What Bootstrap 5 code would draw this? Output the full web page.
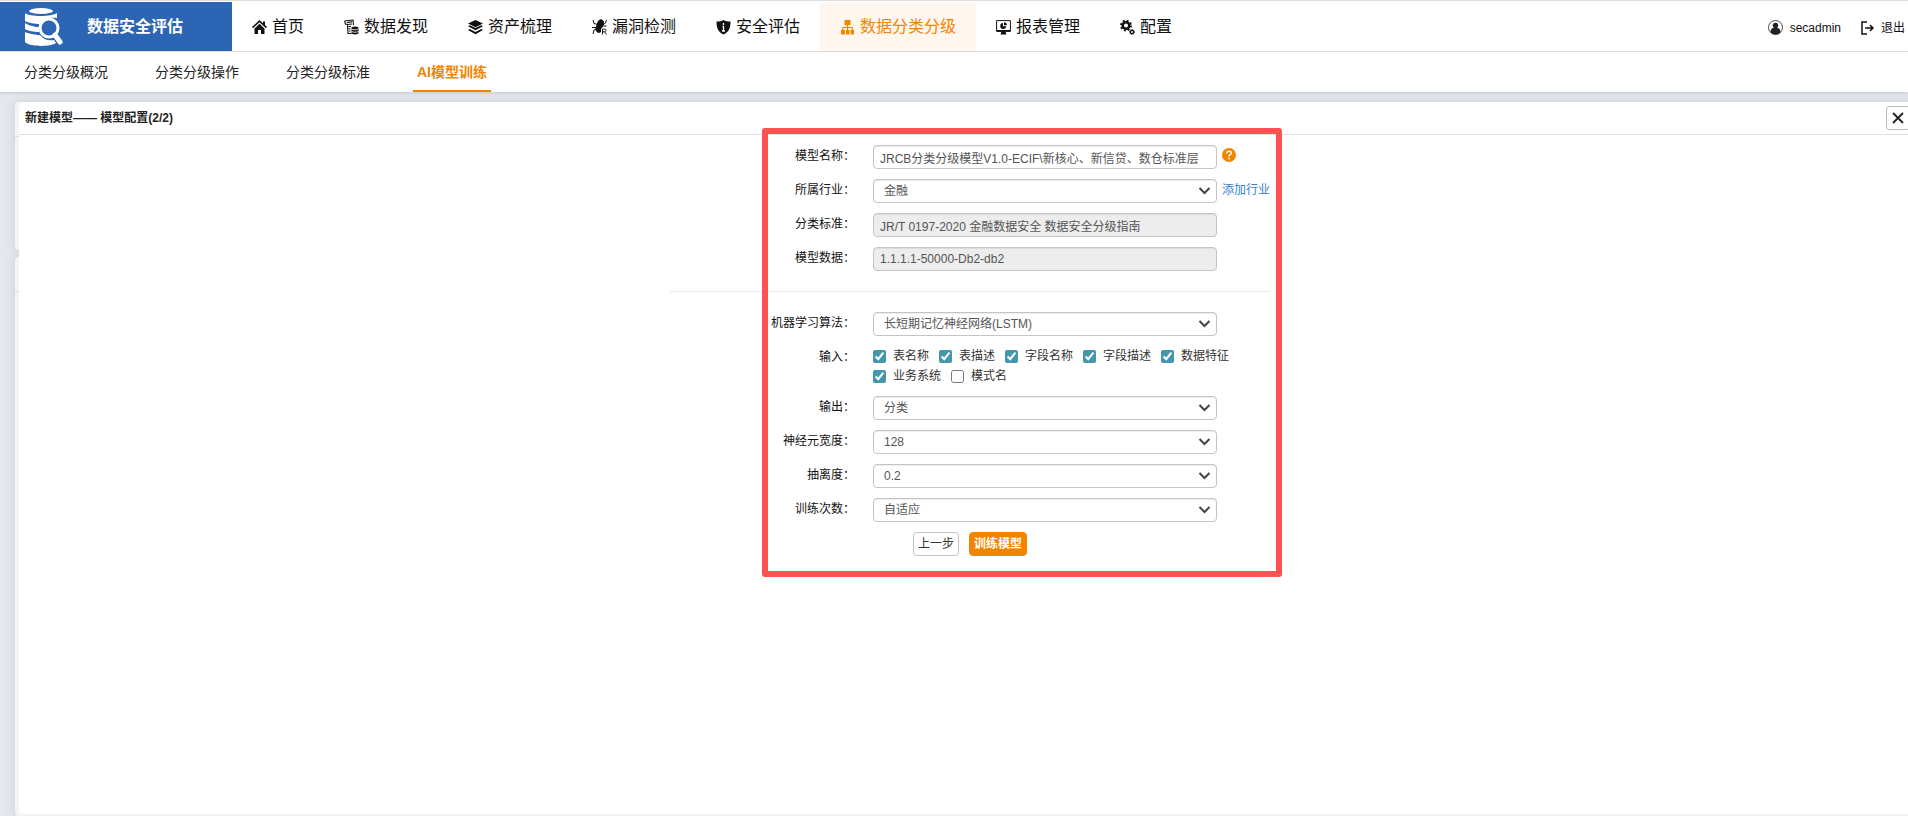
<!DOCTYPE html>
<html lang="zh-CN">
<head>
<meta charset="utf-8">
<meta name="viewport" content="width=device-width, initial-scale=1">
<title>数据安全评估</title>
<link rel="stylesheet" href="https://cdn.jsdelivr.net/npm/bootstrap@5.3.0/dist/css/bootstrap.min.css">
<style>
  body {
    font-family: "Liberation Sans", "Noto Sans CJK SC", sans-serif;
    font-size: 12px; line-height: 20px; color: #222;
    background: #e5e8ed;
    overflow: hidden;
  }
  a { text-decoration: none; color: inherit; }
  .top-bar { height: 52px; border-top: 1px solid #ddd; border-bottom: 1px solid #e2e2e2; padding-top: 1px; }
  .brand-block { width: 232px; background: #2c65b3; padding-left: 25px; gap: 24px; font-size: 16px; }
  .main-menu { font-size: 16px; }
  .main-menu a { padding: 0 20px; gap: 5px; color: #111; white-space: nowrap; }
  .main-menu svg { width: 15px; height: 16px; flex: none; }
  .main-menu a.current { color: #f28500; background: #fff6f0; }
  .user-links { padding: 2px 3px 0 0; gap: 20px; }
  .user-links a { gap: 7px; color: #111; white-space: nowrap; }
  .sub-menu { height: 40px; padding-left: 20px; gap: 39px; font-size: 14px; box-shadow: 0 1px 3px rgba(0,0,0,.15); z-index: 2; }
  .sub-menu a { padding: 2px 4px 0; border-bottom: 2px solid transparent; }
  .sub-menu a.current { color: #f28500; border-bottom-color: #f28500; font-weight: 700; }
  .workspace { padding: 10px 0 2px 19px; }
  .under-cards { position: absolute; left: 15px; right: -13px; top: 10px; bottom: 0; gap: 7px; }
  .under-cards div { background: #f4f4f5; border-radius: 4px; box-shadow: 0 0 12px rgba(60,70,90,.16); }
  .under-cards div::before { content: ""; display: block; margin-top: 34px; border-top: 1px solid #ddd; }
  .under-cards .first-card { min-height: 148px; }
  .dialog-panel { position: relative; background: #fff; border-radius: 5px; margin-right: -13px; }
  .dialog-head { height: 33px; padding: 0 11px 0 6px; border-bottom: 1px solid #dee2e6; }
  .dialog-head h1 { font-size: 12px; line-height: 20px; }
  .close-btn { width: 24px; height: 24px; background: #fff; border: 1px solid #bbb; border-radius: 3px; }
  .model-form { position: relative; width: 600px; padding: 10px 0 15px; }
  .marker-frame { position: absolute; left: 92px; right: -12px; top: -7px; bottom: -6px; border: 6px solid #fb5252; border-radius: 3px; pointer-events: none; }
  .field-row { margin-bottom: 10px; }
  .field-name { width: 185px; margin-right: 18px; text-align: right; line-height: 22px; color: #111; }
  .model-form .form-control, .model-form .form-select {
    width: 344px; height: 24px; min-height: 0; font-size: 12px; line-height: 18px; color: #555;
    border: 1px solid #c4c4c4; border-radius: 4px; box-shadow: inset 0 1px 1px rgba(0,0,0,.075);
    padding: 2px 6px;
  }
  .model-form .form-select {
    padding: 2px 30px 2px 10px;
    background: #fff url("data:image/svg+xml,%3Csvg xmlns='http://www.w3.org/2000/svg' viewBox='0 0 12 8'%3E%3Cpath d='M1 1l5 5 5-5' fill='none' stroke='%23444' stroke-width='2'/%3E%3C/svg%3E") no-repeat right 5px center / 13px 8px;
  }
  .model-form .form-control:read-only { background: #ededed; }
  .tick-list { width: 370px; column-gap: 10px; color: #333; }
  .tick-list label { gap: 7px; }
  .tick-list input { width: 13px; height: 13px; margin: 0; accent-color: #4497ab; }
  .help-dot { color: #f28500; margin-left: 5px; }
  .help-dot svg { display: block; margin-top: 3px; }
  .add-link { margin-left: 5px; line-height: 22px; color: #3681c8; }
  .split-line { height: 1px; background: #e8e8e8; margin: 20px 0; }
  .form-actions { padding-left: 243px; gap: 10px; }
  .form-actions .btn { height: 24px; font-size: 12px; line-height: 18px; padding: 2px 4px; border-radius: 4px; }
  .prev-btn { border: 1px solid #c4c4c4; color: #333; background: #fff; }
  .train-btn { border: 1px solid #f28500; color: #fff; background: #f28500; font-weight: 700; }
</style>
</head>
<body class="min-vh-100 d-flex flex-column">

<header class="top-bar bg-white d-flex">
  <a href="#" class="brand-block d-flex align-items-center text-white fw-bold">
    <svg width="38" height="38" viewBox="0 0 38 38" fill="#fff">
      <ellipse cx="16" cy="3" rx="12" ry="3"/>
      <path d="M0 5c4 4 27 4 32 0v5c-6-1-13 0-17 6-5 0-12-1-15-3z"/>
      <path d="M0 15c3 2 9 4 14 4v5c-5 0-11-1-14-3z"/>
      <path d="M0 24c4 2 11 3 15 3 4 5 9 6 14 5l2 3c-6 4-26 4-31-1z"/>
      <circle cx="24" cy="20" r="9" fill="#2c65b3" stroke="#fff" stroke-width="3"/>
      <path d="M30 27l5 7" stroke="#fff" stroke-width="5" stroke-linecap="round"/>
    </svg>
    <span>数据安全评估</span>
  </a>
  <nav class="main-menu d-flex">
    <a href="#" class="d-flex align-items-center"><svg viewBox="0 0 15 16" fill="currentColor"><path d="M7.500 1L0 8l1 1.200L7.500 3.200 14 9.200 15 8l-2-1.900V2.500h-2v1.700z"/><path d="M7.500 4.800L2.500 9.400V15H6v-4h3v4h3.500V9.400z"/></svg>首页</a>
    <a href="#" class="d-flex align-items-center"><svg viewBox="0 0 15 16" fill="none" stroke="currentColor"><path d="M.5 2l8.500-1 .5 5M.5 2l1 3 2 .5L4 14.500h3.500M3 3.500l5-.6M3.500 5.500l4.500-.5M4.500 7.500H7M4.500 9.700h2M5 12h1.500" stroke-width="1.100"/><path d="M7.500 8.500c2-1.400 5-1.400 7 0v6c-2 1.200-5 1.200-7 0z" fill="currentColor" stroke="none"/><path d="M7.500 10c2 1 5 1 7 0M7.500 12.500c2 1 5 1 7 0" stroke="#fff" stroke-width=".8"/></svg>数据发现</a>
    <a href="#" class="d-flex align-items-center"><svg viewBox="0 0 15 16" fill="currentColor"><path d="M7.500 1L15 4.500 7.500 8.200 0 4.500z"/><path d="M0 7.200l1.800-.9 5.700 2.800 5.700-2.800 1.800.9-7.500 4z"/><path d="M0 11l1.800-.9 5.700 2.800 5.700-2.800L15 11l-7.500 4.200z"/></svg>资产梳理</a>
    <a href="#" class="d-flex align-items-center"><svg viewBox="0 0 15 16" fill="none" stroke="currentColor"><path d="M6 3c1-3 5-3 5.500 0L11 7l-2.500 3v3c-3 1.500-5-1-4.500-4z" fill="currentColor"/><path d="M1 1l1 3.500 4 1M14.500 1l-1 3-3 2M0 8.500h4M1 15l1-4 2.500-1M11.500 7h3M10.500 15.500V10.200h2c2 0 2 2.600 0 2.600h-2M12.500 12.800l2 2.700"/></svg>漏洞检测</a>
    <a href="#" class="d-flex align-items-center"><svg viewBox="0 0 15 16"><path d="M7.500 1c2 1 4.500 1.500 7 1.500C14.500 9 13 13 7.500 15.500 2 13 .5 9 .5 2.500 3 2.500 5.500 2 7.500 1z" fill="currentColor"/><path d="M7.500 4v2M6.500 7.500h1V12M6 12h3" stroke="#fff" stroke-width="1.300" fill="none"/></svg>安全评估</a>
    <a href="#" class="current d-flex align-items-center" aria-current="page"><svg viewBox="0 0 15 16" fill="currentColor"><path d="M4.500 1h6v5h-6zM1 11h4v4.500H1zM6 11h3.500v4.500H6zM10.500 11H14v4.500h-3.500z"/><path d="M7.500 6v5M2.800 11V8.500h9.500V11" fill="none" stroke="currentColor" stroke-width="1.200"/></svg>数据分类分级</a>
    <a href="#" class="d-flex align-items-center"><svg viewBox="0 0 15 16" fill="currentColor"><path d="M.6 1.600h13.800v10.600H.6z" fill="none" stroke="currentColor" stroke-width="1"/><path d="M.5 11h14v1.700H.5zM5.500 12.500h4l1 3h-6zM7 4a3 3 0 1 0 3.200 3.300H7z"/><path d="M8 3.300a3 3 0 0 1 2.900 3H8z"/></svg>报表管理</a>
    <a href="#" class="d-flex align-items-center"><svg viewBox="0 0 15 16" fill="none" stroke="currentColor"><circle cx="6" cy="6.500" r="3.300" stroke-width="2.500"/><circle cx="6" cy="6.500" r="5" stroke-width="1.800" stroke-dasharray="2 1.930"/><circle cx="12" cy="13" r="1.600" stroke-width="1.300"/><circle cx="12" cy="13" r="2.500" stroke-width="1" stroke-dasharray="1 .96"/></svg>配置</a>
  </nav>
  <div class="user-links d-flex align-items-center ms-auto">
    <a href="#" class="d-flex align-items-center"><svg width="15" height="15" viewBox="0 0 15 15"><circle cx="7.500" cy="7.500" r="7" fill="none" stroke="#222" stroke-width=".8"/><circle cx="7.500" cy="5.500" r="2.700" fill="#222"/><path d="M2.500 12.500c0-5 3-4.500 5-4.500s5-.5 5 4.500c-3 2.500-7 2.500-10 0z" fill="#222"/></svg>secadmin</a>
    <a href="#" class="d-flex align-items-center"><svg width="13" height="14" viewBox="0 0 13 14" fill="none" stroke="#111" stroke-width="1.500"><path d="M6 1H1v12h5M4 7h8M9 4l3 3-3 3"/></svg>退出</a>
  </div>
</header>

<nav class="sub-menu bg-white d-flex position-relative">
  <a href="#" class="d-flex align-items-center">分类分级概况</a>
  <a href="#" class="d-flex align-items-center">分类分级操作</a>
  <a href="#" class="d-flex align-items-center">分类分级标准</a>
  <a href="#" class="current d-flex align-items-center" aria-current="page">AI模型训练</a>
</nav>

<main class="workspace position-relative flex-grow-1 d-flex flex-column">
  <div class="under-cards d-flex flex-column">
    <div class="first-card"></div>
    <div class="flex-grow-1"></div>
  </div>
  <section class="dialog-panel flex-grow-1">
    <div class="dialog-head d-flex align-items-center justify-content-between">
      <h1 class="m-0 fw-bold">新建模型—— 模型配置(2/2)</h1>
      <button type="button" class="close-btn p-0 d-flex align-items-center justify-content-center" aria-label="关闭"><svg width="12" height="12" viewBox="0 0 12 12" stroke="#222" stroke-width="1.800"><path d="M1 1l10 10M11 1L1 11"/></svg></button>
    </div>

    <form class="model-form mx-auto">
      <div class="field-row d-flex">
        <label class="field-name" for="model-name">模型名称：</label>
        <input class="form-control" id="model-name" type="text" value="JRCB分类分级模型V1.0-ECIF\新核心、新信贷、数仓标准层">
        <span class="help-dot"><svg width="14" height="14" viewBox="0 0 14 14"><circle cx="7" cy="7" r="7" fill="currentColor"/><path d="M4.800 5.400c0-3 4.500-2.800 4.500-.2C9.300 6.800 7 6.700 7 8.500M7 9.700v1.600" fill="none" stroke="#fff" stroke-width="1.500"/></svg></span>
      </div>
      <div class="field-row d-flex">
        <label class="field-name" for="industry">所属行业：</label>
        <select class="form-select" id="industry"><option>金融</option></select>
        <a class="add-link" href="#">添加行业</a>
      </div>
      <div class="field-row d-flex">
        <label class="field-name" for="standard">分类标准：</label>
        <input class="form-control" id="standard" type="text" readonly value="JR/T 0197-2020 金融数据安全 数据安全分级指南">
      </div>
      <div class="field-row d-flex">
        <label class="field-name" for="model-data">模型数据：</label>
        <input class="form-control" id="model-data" type="text" readonly value="1.1.1.1-50000-Db2-db2">
      </div>

      <div class="split-line"></div>

      <div class="field-row d-flex">
        <label class="field-name" for="algorithm">机器学习算法：</label>
        <select class="form-select" id="algorithm"><option>长短期记忆神经网络(LSTM)</option></select>
      </div>
      <div class="field-row d-flex" role="group" aria-labelledby="input-name">
        <span class="field-name" id="input-name">输入：</span>
        <div class="tick-list d-flex flex-wrap">
          <label class="d-flex align-items-center"><input type="checkbox" checked>表名称</label>
          <label class="d-flex align-items-center"><input type="checkbox" checked>表描述</label>
          <label class="d-flex align-items-center"><input type="checkbox" checked>字段名称</label>
          <label class="d-flex align-items-center"><input type="checkbox" checked>字段描述</label>
          <label class="d-flex align-items-center"><input type="checkbox" checked>数据特征</label>
          <label class="d-flex align-items-center"><input type="checkbox" checked>业务系统</label>
          <label class="d-flex align-items-center"><input type="checkbox">模式名</label>
        </div>
      </div>
      <div class="field-row d-flex">
        <label class="field-name" for="output">输出：</label>
        <select class="form-select" id="output"><option>分类</option></select>
      </div>
      <div class="field-row d-flex">
        <label class="field-name" for="neurons">神经元宽度：</label>
        <select class="form-select" id="neurons"><option>128</option></select>
      </div>
      <div class="field-row d-flex">
        <label class="field-name" for="dropout">抽离度：</label>
        <select class="form-select" id="dropout"><option>0.2</option></select>
      </div>
      <div class="field-row d-flex">
        <label class="field-name" for="epochs">训练次数：</label>
        <select class="form-select" id="epochs"><option>自适应</option></select>
      </div>
      <div class="form-actions d-flex">
        <button type="button" class="btn prev-btn">上一步</button>
        <button type="submit" class="btn train-btn">训练模型</button>
      </div>
      <div class="marker-frame"></div>
    </form>
  </section>
</main>

<script src="https://cdn.jsdelivr.net/npm/bootstrap@5.3.0/dist/js/bootstrap.bundle.min.js"></script>
</body>
</html>
